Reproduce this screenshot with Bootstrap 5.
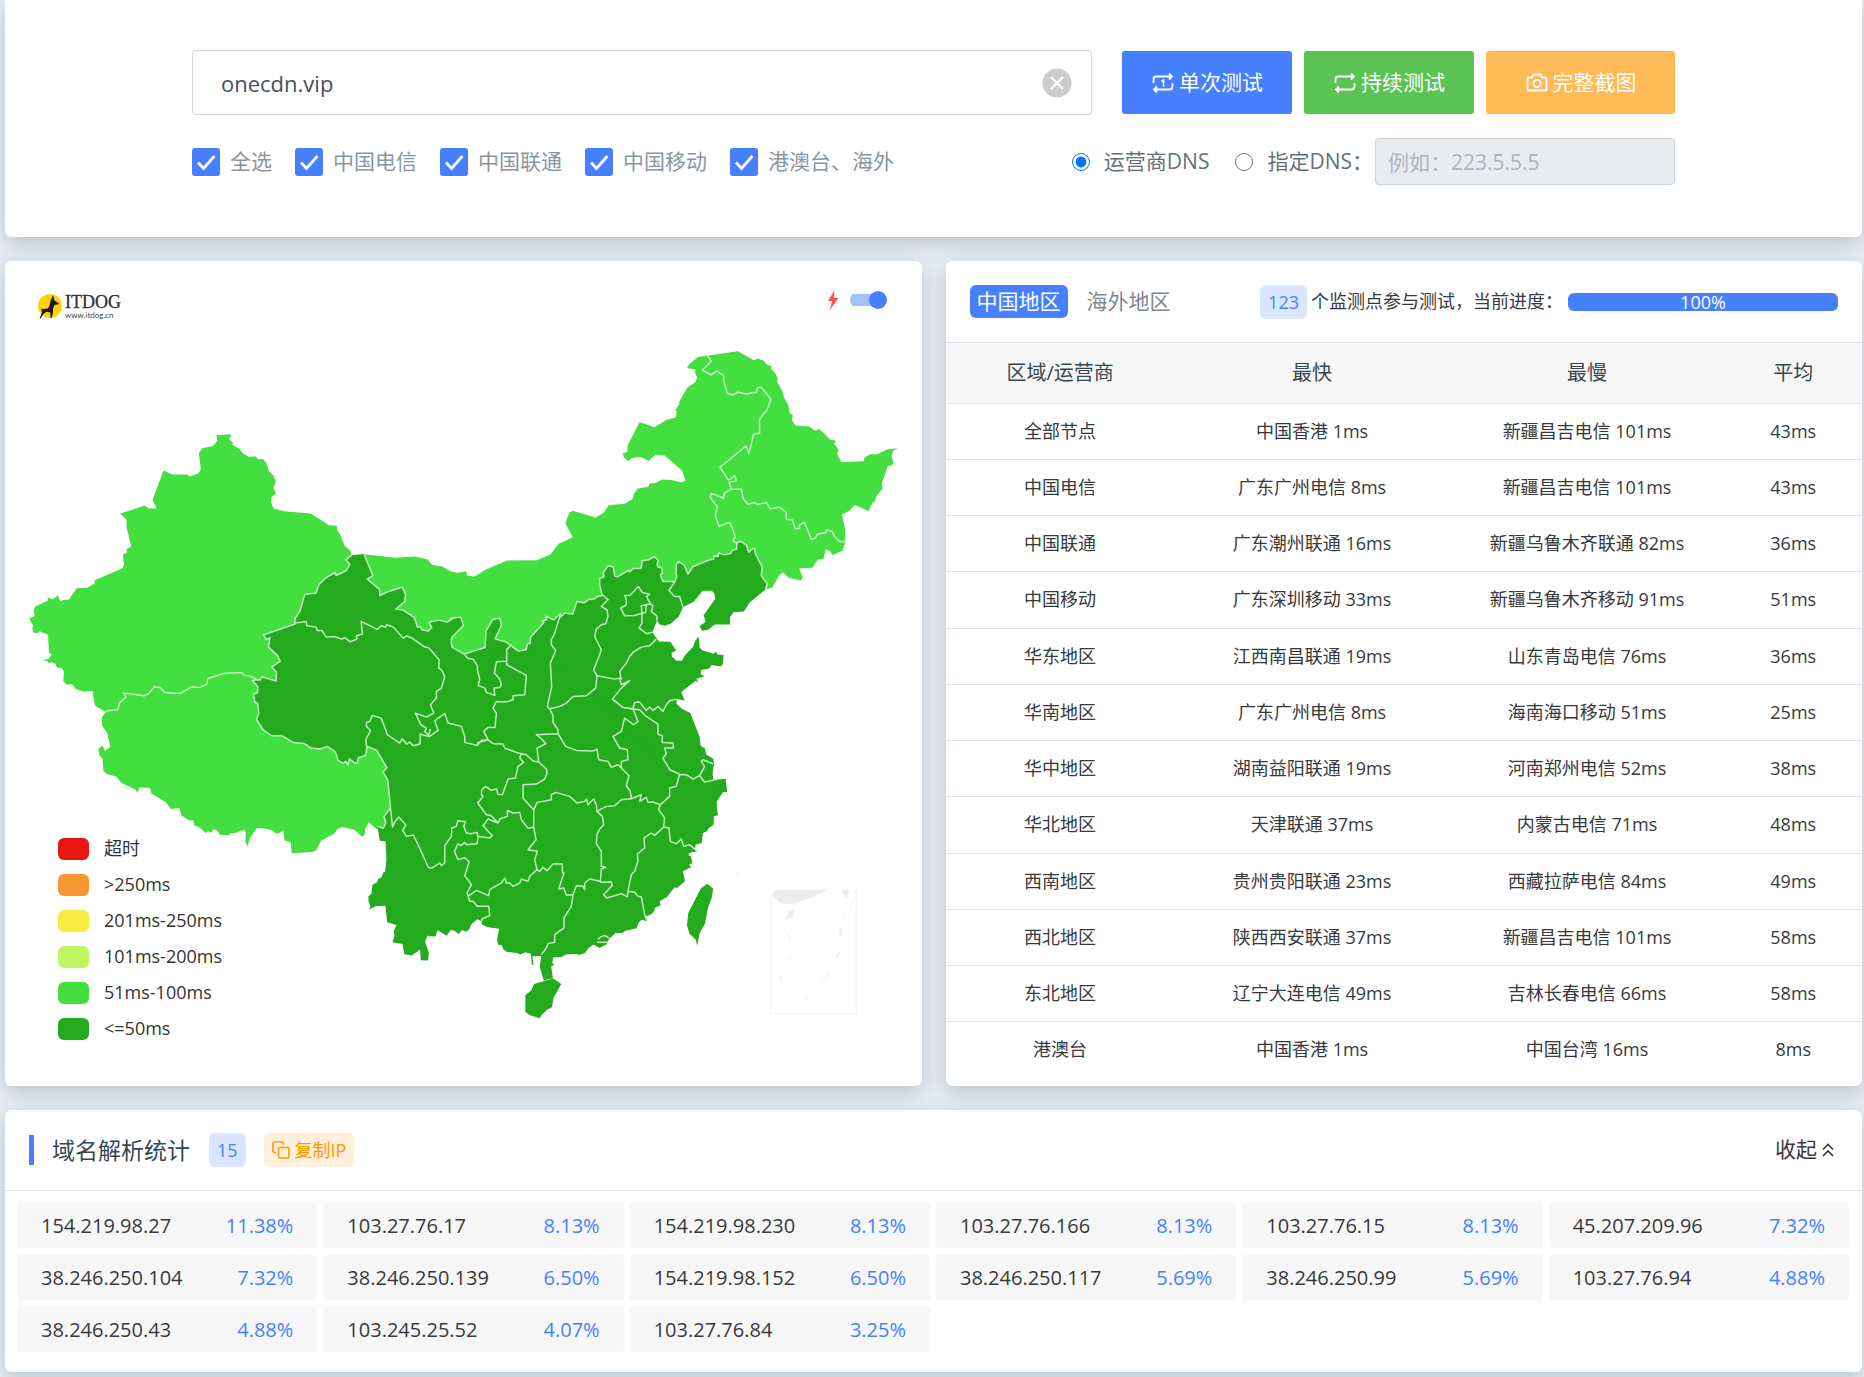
<!DOCTYPE html>
<html lang="zh-CN">
<head>
<meta charset="utf-8">
<meta name="viewport" content="width=device-width, initial-scale=1">
<title>ITDOG</title>
<link href="https://cdn.jsdelivr.net/npm/bootstrap@5.3.0/dist/css/bootstrap.min.css" rel="stylesheet">
<style>
:root{--brand:#4680ff;--rule:#dee5ea}
body{background:#e9eef4;font-family:"Open Sans","Noto Sans CJK SC",sans-serif;font-size:18px;color:#37393c;line-height:27px}
.page{padding:0 2px 5px 5px}
.panel{background:#fff;border-radius:6px;box-shadow:0 6px 20px rgba(69,90,110,.3)}
.panel-top{border-radius:0 0 6px 6px;padding:50px 187px 52px}
.fs-21{font-size:21px}
.host-box{height:65px;border:1px solid #ced4da;border-radius:4px;font-size:22px;padding:0 60px 0 28px;color:#495057}
.clear-btn{right:20px;top:18px;width:30px;height:30px}
.actions{gap:12px;margin-left:30px}
.action{height:63px;width:170px;border-radius:3px;font-size:21px;color:#fff;gap:4px;padding:0}
.action-wide{width:189px}
.c-blue{background:var(--brand)}.c-green{background:#5ac354}.c-orange{background:#ffb957}
.options{margin-top:23px}
.ticks{gap:23px}
.ticks label{gap:10px}
.form-check-input.tick{width:28px;height:28px;margin:0;border:0;border-radius:3px;float:none}
.form-check-input.tick:checked{background-color:var(--brand);background-image:url("data:image/svg+xml,%3csvg xmlns='http://www.w3.org/2000/svg' viewBox='0 0 28 28'%3e%3cpath d='M6 14.500l5.500 6L22.500 8' fill='none' stroke='%23fff' stroke-width='2.800'/%3e%3c/svg%3e")}
.pick{width:18px;height:18px;margin:0;accent-color:#0075ff}
.dns-pick{gap:14px;margin-right:26px}
.dns-last{margin-right:2px}
.t-soft{color:#8b959e}.t-dim{color:#65707b}
.dns-box{width:300px;height:47px;border:1px solid #ced4da;border-radius:4px;font-size:21px;padding:0 12px}
.dns-box:disabled{background:#e9ecef}
.dns-box::placeholder{color:#adb5bd}
.legend{left:53px;bottom:39px}
.legend li{height:36px;gap:15px;color:#333}
.swatch{width:31px;height:22px;border-radius:6px}
.toggle-wrap{right:35px;top:29px;gap:11px}
.toggle{appearance:none;width:37px;height:18px;margin:0;position:relative;background:linear-gradient(#a3c0ff,#a3c0ff) 0 3px/34px 12px no-repeat;border-radius:9px}
.toggle::before{content:"";position:absolute;right:0;top:0;width:18px;height:18px;border-radius:50%;background:var(--brand)}
.card-top{height:81px;padding:0 27px 0 24px;border-bottom:1px solid var(--rule)}
.card-top-tabs{height:82px;padding-right:24px}
.tab-on{background:var(--brand);color:#fff;border:0;border-radius:6px;height:33px;line-height:33px;padding:0 7px}
.tab-off{color:#7e868e;padding:0 7px;border:0;background:none;line-height:33px}
.chip{background:#dae6ff;color:var(--brand);border-radius:6px;height:34px;line-height:34px;padding:0 8px}
.chip-copy{background:#fff0dd;color:#ff9800;border:0;gap:5px;margin-left:14px}
.meter{width:270px;height:18px;border-radius:6px;font-size:18px;margin-left:5px;overflow:visible}
.meter .progress-bar{background:var(--brand);line-height:18px;border-radius:6px;overflow:visible}
.stats{height:734px;text-align:center}
.stats th,.stats td{padding:0;border-bottom:1px solid var(--rule);vertical-align:middle;color:#37393c}
.stats thead tr{height:60px}
.stats th{font-weight:400;font-size:20px;background:#f7f7f7;color:#37474f}
.stats tbody tr:last-child td{border-bottom:0}
.title-bar{width:5px;height:30px;background:var(--brand)}
.title-text{font-size:23px;line-height:34px;color:#37474f;font-weight:400;margin:0 15px 0 18px}
.ip-wrap{padding:12px 10px 20px 9px}
.ip-cell{height:45px;background:#f7f7f7;border-radius:4px;padding:0 24px;font-size:20px}
.ip-grid{--bs-gutter-x:6px;--bs-gutter-y:7px}
.ip-cell a{color:#37393c;text-decoration:none}
.t-blue{color:var(--brand)}
.lands{fill:#43df40}.landd{fill:#24aa1d}
.edge{fill:none;stroke:#c4efc2;stroke-width:4.4;stroke-linejoin:round}
</style>
<script src="https://cdn.jsdelivr.net/npm/bootstrap@5.3.0/dist/js/bootstrap.bundle.min.js"></script>
</head>
<body>
<div class="page">

<section class="panel panel-top">
  <div class="d-flex align-items-center">
    <div class="position-relative flex-grow-1">
      <input class="form-control host-box" type="text" value="onecdn.vip" aria-label="域名">
      <button class="btn p-0 border-0 position-absolute clear-btn d-flex" type="button" aria-label="清除">
        <svg width="30" height="30" viewBox="0 0 30 30"><circle cx="15" cy="15" r="14.5" fill="#ccc"/><path d="M9 9l12 12M21 9L9 21" stroke="#fff" stroke-width="2.2"/></svg>
      </button>
    </div>
    <div class="d-flex actions">
      <button class="btn action c-blue d-flex align-items-center justify-content-center" type="button">
        <svg width="24" height="24" viewBox="0 0 24 24" fill="none" stroke="#fff" stroke-width="1.8"><path d="M2.5 12V8.500Q2.500 5.500 5.500 5.500H21M18 2.500l3 3-3 3M21.500 12v3.500q0 3-3 3H3M6 15.500l-3 3 3 3"/><path d="M10.500 10.500l2-1.300v6.500" stroke-width="1.500"/></svg>单次测试</button>
      <button class="btn action c-green d-flex align-items-center justify-content-center" type="button">
        <svg width="24" height="24" viewBox="0 0 24 24" fill="none" stroke="#fff" stroke-width="1.8"><path d="M2.500 12V8.500Q2.500 5.500 5.500 5.500H21M18 2.500l3 3-3 3M21.500 12v3.500q0 3-3 3H3M6 15.500l-3 3 3 3"/></svg>持续测试</button>
      <button class="btn action action-wide c-orange d-flex align-items-center justify-content-center" type="button">
        <svg width="24" height="24" viewBox="0 0 24 24" fill="none" stroke="#fff" stroke-width="1.9" stroke-linejoin="round"><path d="M2.500 7.500q0-1 1-1H7l1.500-3h7l1.500 3h3.500q1 0 1 1v11q0 1-1 1h-17q-1 0-1-1z"/><circle cx="12" cy="12.500" r="3.600"/></svg>完整截图</button>
    </div>
  </div>
  <div class="d-flex align-items-center justify-content-between fs-21 options">
    <div class="d-flex t-soft ticks">
      <label class="d-flex align-items-center"><input class="form-check-input tick" type="checkbox" checked><span>全选</span></label>
      <label class="d-flex align-items-center"><input class="form-check-input tick" type="checkbox" checked><span>中国电信</span></label>
      <label class="d-flex align-items-center"><input class="form-check-input tick" type="checkbox" checked><span>中国联通</span></label>
      <label class="d-flex align-items-center"><input class="form-check-input tick" type="checkbox" checked><span>中国移动</span></label>
      <label class="d-flex align-items-center"><input class="form-check-input tick" type="checkbox" checked><span>港澳台、海外</span></label>
    </div>
    <div class="d-flex align-items-center t-dim">
      <label class="d-flex align-items-center dns-pick"><input class="pick" type="radio" name="dns" checked><span>运营商DNS</span></label>
      <label class="d-flex align-items-center dns-pick dns-last"><input class="pick" type="radio" name="dns"><span>指定DNS：</span></label>
      <input class="form-control dns-box" type="text" placeholder="例如：223.5.5.5" aria-label="指定DNS" disabled>
    </div>
  </div>
</section>

<div class="d-flex mt-4 gap-4">
  <section class="panel position-relative" style="flex:1 1 0">
    <svg class="d-block w-100" viewBox="5 261 917 825" role="img" aria-label="中国地图">
      <g transform="translate(38 294)">
        <circle cx="12" cy="12" r="12" fill="#fcd20a"/>
        <path fill="#231815" d="M15 1L16.500 6.500 21 9.500 20 10.500 16.500 11 15 14.500 15 19 13.500 24H12.500L12.300 18.500 8.500 17.800 5.500 20 2.500 24.500H1.500L4 18.500 3.200 14.500 4.500 15 9.500 14.500 11.500 12 12.500 7Z"/>
        <text x="27" y="14" font-family="Liberation Serif,serif" font-size="18" fill="#333" stroke="#333" stroke-width=".3">ITDOG</text>
        <text x="27" y="24" font-family="Lato,sans-serif" font-size="8" fill="#444">www.itdog.cn</text>
      </g>
      <g transform="translate(0 260) scale(.33333)">
        <path class="lands" d="M650 526L691 523 694 530 687 537 700 549 697 554 720 568 729 580 747 591 767 589 774 598 790 598 799 608 807 633 822 648 828 668 821 683 828 700 814 714 814 728 821 746 853 754 933 761 988 796 1011 798 1012 812 1021 824 1034 857 1052 874 1056 886 1091 883 1187 894 1246 890 1284 899 1297 915 1327 920 1352 934 1374 940 1398 935 1400 947 1423 951 1440 942 1440 1440 327 1440 322 1420 306 1396 306 1375 317 1371 320 1357 286 1338 280 1310 278 1294 250 1295 227 1287 215 1273 201 1275 190 1264 192 1237 186 1225 171 1223 166 1211 153 1207 147 1211 143 1205 130 1201 146 1197 155 1185 147 1178 144 1125 119 1114 111 1120 99 1117 97 1105 99 1096 87 1076 104 1069 101 1052 106 1040 145 1021 142 1013 159 1018 173 1006 180 1023 207 1019 230 985 262 984 284 971 284 961 368 925 372 914 369 884 382 877 379 868 394 860 380 804 380 780 360 762 434 737 447 746 470 746 458 720 491 632 517 644 562 644 569 650 595 641 603 628 597 580 607 565 639 558 652 543Z"/>
      </g>
      <g transform="translate(0 700) scale(.33333)">
        <path class="lands" d="M283 0L286 17 318 37 306 52 306 76 323 102 331 142 315 154 308 138 295 146 298 166 308 178 310 213 321 223 350 231 364 249 408 270 412 281 418 263 450 264 454 281 498 308 513 328 539 325 545 348 570 363 581 361 582 376 600 384 617 400 626 394 634 400 640 389 650 391 661 406 688 406 694 400 704 401 733 390 738 400 736 428 744 440 749 416 771 385 792 386 815 391 830 402 850 395 854 422 872 428 876 461 940 457 950 450 964 423 1005 401 1012 389 1028 382 1065 391 1086 411 1096 404 1096 388 1107 368 1130 388 1140 390 1174 390 1171 0Z"/>
      </g>
      <g transform="translate(450 330) scale(.33333)">
        <path class="lands" d="M0 725L24 729 50 725 51 737 73 742 104 721 172 692 262 691 302 674 327 642 369 622 347 580 359 548 368 543 438 563 462 549 477 526 525 522 548 508 553 492 564 476 597 471 599 461 616 460 637 449 664 450 697 457 708 452 697 422 645 377 618 374 597 393 575 381 547 384 536 393 523 383 519 370 533 366 534 346 570 276 614 292 650 270 679 262 681 243 677 240 689 222 689 215 714 172 738 156 742 142 736 128 738 119 712 114 719 103 745 81 865 64 913 91 925 86 944 93 950 103 966 109 964 117 976 128 985 146 982 154 1000 187 1003 203 1016 224 1020 250 1030 255 1027 271 1038 287 1079 290 1095 302 1110 298 1143 330 1159 332 1154 342 1168 360 1162 372 1176 397 1242 394 1245 383 1263 373 1283 373 1312 359 1344 355 1331 363 1326 378 1331 397 1329 405 1315 408 1297 460 1299 476 1280 500 1276 515 1270 517 1257 544 1215 525 1200 543 1177 554 1187 600 1186 640 1180 662 1151 675 1158 688 1142 665 1129 658 1122 687 1105 690 1088 714 1048 716 1060 742 1054 752 1017 744 1001 728 989 736 968 774 948 779 900 790 800 760 740 770 650 800 480 860 330 960 210 1000 0 1000Z"/>
        <path class="landd" d="M0 866L33 862 41 887 6 923 4 938 8 953 43 973 106 953 109 903 129 869 150 865 155 886 136 927 170 937 206 964 229 960 233 943 241 941 243 922 283 878 276 874 291 870 288 859 312 870 332 852 330 864 345 850 369 853 382 815 403 819 417 809 436 807 443 800 458 797 450 765 450 746 463 741 461 728 475 708 491 711 495 739 504 741 537 721 539 726 551 716 575 715 577 693 597 690 614 680 626 693 622 705 627 713 636 712 638 730 632 735 640 755 676 755 682 739 679 733 680 703 688 696 704 706 715 733 730 710 780 690 792 688 794 678 806 679 807 669 825 675 843 671 848 662 861 658 862 640 872 634 890 645 897 667 908 657 915 656 917 671 938 712 935 737 953 762 948 779 900 818 883 845 852 847 841 862 841 884 796 884 775 900 757 903 750 889 768 876 762 856 797 807 794 790 786 783 759 783 733 815 700 832 687 861 664 881 645 888 630 884 622 873 608 907 628 935 662 936 680 962 666 969 667 981 681 993 697 993 705 978 730 952 737 933 747 920 750 953 757 961 790 972 800 966 803 974 822 976 820 1003 813 1010 785 1006 779 1016 755 1021 753 1033 764 1040 741 1047 746 1060 738 1053 695 1087 705 1112 681 1108 681 1122 697 1137 722 1150 750 1222 753 1248 766 1256 770 1274 791 1287 793 1303 789 1330 791 1351 828 1347 833 1386 820 1388 800 1418 802 1440 0 1440Z"/>
      </g>
      <g transform="translate(240 540) scale(.33333)">
        <path class="landd" d="M336 46L373 43 399 108 382 117 419 149 420 167 441 157 463 150 488 142 497 163 495 185 468 208 490 211 523 233 527 243 533 262 543 262 546 270 565 274 576 263 568 247 597 241 622 247 640 236 664 233 669 258 637 292 636 305 632 310 637 318 674 344 736 325 801 330 836 334 860 330 1000 400 1100 500 1300 700 1430 720 1432 760 1430 790 1435 827 1423 830 1422 855 1407 866 1402 875 1390 880 1386 910 1368 915 1366 930 1374 935 1348 940 1347 947 1354 950 1358 970 1348 975 1355 982 1330 995 1336 1025 1312 1045 1305 1043 1282 1072 1260 1085 1263 1097 1246 1104 1243 1116 1233 1125 1218 1130 1222 1144 1205 1140 1195 1152 1191 1166 1155 1174 1149 1180 1128 1180 1108 1198 1100 1215 1080 1225 1062 1215 1046 1225 1036 1240 1018 1246 1010 1243 978 1245 967 1252 940 1254 938 1270 944 1277 934 1279 940 1316 912 1323 900 1280 905 1250 878 1250 881 1278 876 1274 874 1243 858 1238 841 1245 832 1240 802 1237 790 1229 787 1218 775 1215 772 1200 778 1167 745 1163 727 1155 725 1145 713 1139 695 1154 689 1168 680 1176 667 1171 657 1183 644 1173 633 1171 621 1188 593 1172 587 1191 566 1190 563 1187 556 1207 567 1238 565 1263 543 1262 541 1230 516 1248 494 1244 488 1213 458 1208 464 1190 462 1175 470 1156 442 1148 437 1098 407 1100 388 1110 392 1100 386 1085 386 1070 395 1062 398 1035 412 1028 415 1018 425 1013 431 998 436 997 440 958 437 905 420 903 413 860 430 866 438 850 433 830 452 805 444 722 430 697 441 684 411 632 382 620 377 647 355 655 353 670 345 670 329 657 325 675 318 665 310 671 295 662 288 640 280 631 262 620 240 628 214 625 193 611 160 608 126 588 95 588 70 570 50 540 57 520 53 490 45 488 41 462 53 460 54 440 38 423 50 419 61 421 66 411 109 424 110 397 95 382 121 365 113 347 86 322 90 294 78 299 72 285 165 253 165 238 180 215 195 163 229 160 237 135 258 114 286 98 289 107 320 92 330 73 318 60Z"/>
        <path class="landd" d="M940 1317L965 1333 941 1375 937 1403 923 1410 905 1427 900 1436 869 1426 857 1417 857 1366 875 1352 883 1333ZM1403 1032L1421 1047 1416 1075 1405 1105 1396 1152 1380 1180 1373 1218 1368 1200 1350 1183 1342 1157 1346 1120 1384 1046Z"/>
        <path class="edge" d="M336 46L318 60 330 73 320 92 289 107 286 98 258 114 237 135 229 160 195 163 180 215 165 238 165 253 72 285 78 299 90 294 86 322 113 347 121 365 95 382 110 397 109 424 66 411 61 421 50 419 38 423 54 440 53 460 41 462 45 488 53 490 57 520 50 540 70 570 95 588 126 588 160 608 193 611 214 625 240 628 262 620 280 631 288 640 295 662 310 671 318 665 325 675 329 657 345 670 353 670 355 655 377 647 382 620 411 632 441 684 430 697 444 722 458 862 466 845 477 832 498 856 489 872 500 890 521 886 545 937 565 982 575 986 600 970 605 978 615 970 615 918 635 890 636 865 650 860 654 843 677 846 672 860 680 880 695 882 712 878 715 892 712 912 679 915 675 908 663 918 655 912 644 935 655 960 675 954 688 966 675 1008 695 1035 682 1060 690 1085 700 1085 712 1100 747 1100 750 1128 727 1138 725 1145
        M413 860L430 866 438 850 433 830 452 805
        M373 43L399 108 382 117 419 149 420 167 441 157 463 150 488 142 497 163 495 185 468 208 490 211 523 233 527 243 533 262 543 262 546 270 565 274 576 263 568 247 597 241 622 247 640 236
        M165 250L199 245 201 258 230 262 232 272 246 272 259 292 283 290 305 298 315 294 332 306 351 298 350 288 368 283 364 245 412 269 424 258 437 262 441 255 461 262 490 295 500 288 520 297 552 320 568 325 598 360 597 385 605 390 615 410 605 445 590 455 590 475 572 495 582 520 560 532 527 520 543 555 560 565 555 575 570 590 595 572 585 543 615 521 625 550 665 560 675 590 675 608 712 617 725 602 745 600 732 575 745 563 766 563 770 520 760 505 770 485 798 487 820 480 820 468 855 465 860 407 801 375 801 330 812 318
        M380 620L378 600 392 573 380 560 380 548 390 545 398 527 424 535 443 585 480 610 487 597 500 613 510 607 520 618 541 613 541 583 565 590 572 568
        M674 344L685 356 700 358 713 378 713 390 720 420 715 437 735 445 740 458 765 467 763 445 780 443 785 435 780 418 764 400 770 366 801 364
        M712 610L745 600 760 612 790 613 795 625 835 640 860 645 880 664 897 667 892 625 918 612 905 597 890 585 955 582 955 570 940 548 940 528 930 507 923 500 936 440 932 370 948 332 935 315 935 300 945 280 962 225
        M845 640L840 655 852 668 835 680 827 715 805 718 788 765 775 764 770 747 755 752 737 740 726 750 725 765 730 770 714 790 740 825 755 828 775 850 780 838 803 830 803 812 820 820 840 818 845 840 865 866 882 862 882 810 865 792 850 775 850 735 890 733 915 718 922 700 920 688 897 667
        M712 890L750 895 758 888 730 858 745 838 775 850M882 862L889 900 865 930 893 935 885 960 892 990 870 1010 865 1025 845 1018 840 1030 820 1040 810 1030 800 1030 795 1015 785 1030 750 1050 747 1068 710 1052 685 1070M892 990L900 995 910 983 922 993 940 973 968 973 968 1000 973 1000 957 1048 972 1045 980 1067 1000 1065 995 1100 973 1135 973 1165 945 1185 945 1208 925 1212 920 1225 905 1245
        M882 810L892 788 935 780 935 765 948 758 990 770 1012 790 1035 785 1040 778 1045 795 1062 778 1070 795 1072 815 1088 830 1092 855 1080 868 1072 885 1070 912 1085 935 1085 980 1098 983 1085 988 1082 1025 1050 1018 1035 1030 1035 1050 1030 1040 1010 1038 1000 1065
        M1082 1028L1115 1027 1118 1037 1092 1065 1102 1075 1145 1062 1163 1072 1165 1055 1185 1058 1195 1070 1205 1072 1215 1125 1220 1140M1165 1055L1175 1005 1185 995 1195 965 1193 943 1215 925 1213 895 1235 880 1245 887 1272 862 1275 835 1257 810 1262 795 1240 787 1225 788 1220 773 1200 785 1205 765 1175 777 1145 780 1125 798 1100 800 1072 815M1175 775L1172 755 1160 738 1168 708 1145 685 1135 675 1115 683 1105 665 1077 660 1072 628 1060 634 1010 632 978 620 955 582
        M930 507L960 500 980 490 1000 470 1040 468 1068 445 1072 408 1062 390 1078 350 1085 330 1065 290 1070 268 1085 255 1098 252 1105 230 1102 210 1085 200 1105 180 1088 165M1072 408L1125 418 1140 415 1145 435 1170 423 1145 445 1118 478 1150 503 1180 507 1185 488 1200 487 1220 512 1230 502 1240 512 1255 500 1270 515 1280 495 1290 483 1312 478M1145 420L1140 395 1160 370 1170 350 1180 338 1205 322 1230 318 1250 298
        M1180 507L1195 545 1182 555 1155 535 1145 575 1120 590 1140 625 1163 630 1165 660 1145 665 1145 685M1170 507L1200 510 1220 530 1235 540 1255 553 1255 583 1268 588 1268 608 1300 610 1302 625 1275 625 1280 642 1270 655 1290 690 1320 703 1310 740 1290 745 1290 770 1262 795M1320 705L1340 705 1360 718 1380 708 1395 727 1432 719M1380 708L1395 680 1385 665 1390 660 1420 672M1272 862L1288 865 1292 905 1310 912 1325 898 1332 920 1350 915 1370 932M1072 1208L1108 1208M1075 1200Q1090 1180 1108 1195"/>
      </g>
      <g transform="translate(450 330) scale(.33333)">
        <path class="edge" d="M0 866L33 862 41 887 6 923 4 938 8 953 43 973 106 953 109 903 129 869 150 865 155 886 136 927 170 937 206 964 229 960 233 943 241 941 243 922 283 878 276 874 291 870 288 859 312 870 332 852 330 864 345 850 369 853 382 815 403 819 417 809 436 807 443 800 458 797 450 765 450 746 463 741 461 728 475 708 491 711 495 739 504 741 537 721 539 726 551 716 575 715 577 693 597 690 614 680 626 693 622 705 627 713 636 712 638 730 632 735 640 755 676 755 682 739 679 733 680 703 688 696 704 706 715 733 730 710 780 690 792 688 794 678 806 679 807 669 825 675 843 671 848 662 861 658 862 640 872 634 890 645 897 667 908 657 915 656 917 671 938 712 935 737 953 762 948 779
        M513 835L530 825 530 810 525 797 540 797 550 787 566 770 578 788 600 793 590 800 603 822 575 828 577 850 555 857 525 858ZM603 822L610 828 605 845 622 858 622 873M577 850L577 880 568 895 592 912 608 907M590 825L588 848 577 850
        M774 78L785 93 758 121 785 135 801 123 822 137 822 150 833 190 850 195 865 187 890 192 920 187 925 173 936 173 964 208 953 238 930 268 930 310 912 313 898 372 890 348 811 412 836 450 845 446 855 437 860 453 838 457 845 478 825 490 822 505 785 490 782 503 803 530 797 555 808 590 841 577 857 620 850 633 862 640
        M845 478L876 478 880 505 895 523 915 518 925 524 950 518 962 537 990 532 1010 548 1010 568 1028 570 1037 597 1050 595 1050 585 1065 577 1085 628 1098 625 1103 613 1130 608 1130 600 1148 605 1155 620 1170 635 1187 635M676 755L658 782 675 800 690 800 700 832"/>
      </g>
      <g transform="translate(0 260) scale(.33333)">
        <path class="edge" d="M317 1357L324 1352 353 1351 358 1330 378 1312 372 1300 433 1308 446 1302 463 1281 481 1284 495 1298 540 1301 576 1281 600 1283 621 1273 624 1256 671 1241 725 1238 733 1246 751 1249 775 1262"/>
      </g>
      <g transform="translate(600 780) scale(.33333)">
        <path d="M515 342V703H770V327" fill="none" stroke="#f1f1f1" stroke-width="3"/>
        <path fill="#ececec" d="M515 342L532 330H684L632 355 575 374 542 371ZM725 331H750L740 357ZM568 394L588 390 576 412 558 419ZM410 282L420 278 417 284ZM720 444H726V468H720ZM718 515L725 513 715 533 708 534ZM538 588H544L550 610Z"/>
        <path d="M765 357L752 378M738 400L726 418M565 460L572 484M582 521L565 541M690 580L667 610M630 652L612 661" fill="none" stroke="#ececec" stroke-width="2"/>
      </g>
    </svg>
    <label class="position-absolute toggle-wrap d-flex align-items-center">
      <svg width="12" height="20" viewBox="0 0 12 20"><path d="M7.500 0L1 11h4l-2 9L11.500 8H7z" fill="#ff5252"/></svg>
      <input class="toggle" type="checkbox" role="switch" aria-label="极速模式" checked>
    </label>
    <ul class="list-unstyled position-absolute legend m-0">
      <li class="d-flex align-items-center"><span class="swatch" style="background:#e71610"></span>超时</li>
      <li class="d-flex align-items-center"><span class="swatch" style="background:#f89832"></span>&gt;250ms</li>
      <li class="d-flex align-items-center"><span class="swatch" style="background:#f8eb46"></span>201ms-250ms</li>
      <li class="d-flex align-items-center"><span class="swatch" style="background:#bef663"></span>101ms-200ms</li>
      <li class="d-flex align-items-center"><span class="swatch" style="background:#43df40"></span>51ms-100ms</li>
      <li class="d-flex align-items-center"><span class="swatch" style="background:#24aa1d"></span>&lt;=50ms</li>
    </ul>
  </section>

  <section class="panel" style="flex:1 1 0">
    <div class="card-top card-top-tabs d-flex align-items-center justify-content-between">
      <div class="d-flex fs-21" style="gap:12px"><button class="tab-on" type="button">中国地区</button><button class="tab-off" type="button">海外地区</button></div>
      <div class="d-flex align-items-center">
        <span class="chip me-1">123</span><span>个监测点参与测试，当前进度：</span>
        <div class="progress meter"><div class="progress-bar" role="progressbar" aria-label="进度" aria-valuenow="100" style="width:100%">100%</div></div>
      </div>
    </div>
    <table class="stats w-100">
      <colgroup><col style="width:25%"><col style="width:30%"><col style="width:30%"><col style="width:15%"></colgroup>
      <thead><tr><th>区域/运营商</th><th>最快</th><th>最慢</th><th>平均</th></tr></thead>
      <tbody>
        <tr><td>全部节点</td><td>中国香港 1ms</td><td>新疆昌吉电信 101ms</td><td>43ms</td></tr>
        <tr><td>中国电信</td><td>广东广州电信 8ms</td><td>新疆昌吉电信 101ms</td><td>43ms</td></tr>
        <tr><td>中国联通</td><td>广东潮州联通 16ms</td><td>新疆乌鲁木齐联通 82ms</td><td>36ms</td></tr>
        <tr><td>中国移动</td><td>广东深圳移动 33ms</td><td>新疆乌鲁木齐移动 91ms</td><td>51ms</td></tr>
        <tr><td>华东地区</td><td>江西南昌联通 19ms</td><td>山东青岛电信 76ms</td><td>36ms</td></tr>
        <tr><td>华南地区</td><td>广东广州电信 8ms</td><td>海南海口移动 51ms</td><td>25ms</td></tr>
        <tr><td>华中地区</td><td>湖南益阳联通 19ms</td><td>河南郑州电信 52ms</td><td>38ms</td></tr>
        <tr><td>华北地区</td><td>天津联通 37ms</td><td>内蒙古电信 71ms</td><td>48ms</td></tr>
        <tr><td>西南地区</td><td>贵州贵阳联通 23ms</td><td>西藏拉萨电信 84ms</td><td>49ms</td></tr>
        <tr><td>西北地区</td><td>陕西西安联通 37ms</td><td>新疆昌吉电信 101ms</td><td>58ms</td></tr>
        <tr><td>东北地区</td><td>辽宁大连电信 49ms</td><td>吉林长春电信 66ms</td><td>58ms</td></tr>
        <tr><td>港澳台</td><td>中国香港 1ms</td><td>中国台湾 16ms</td><td>8ms</td></tr>
      </tbody>
    </table>
  </section>
</div>

<section class="panel mt-4">
  <div class="card-top d-flex align-items-center">
    <span class="title-bar"></span>
    <h2 class="title-text">域名解析统计</h2>
    <span class="chip mx-1">15</span>
    <button class="chip chip-copy d-flex align-items-center" type="button">
      <svg width="18" height="18" viewBox="0 0 18 18" fill="none" stroke="#ff9800" stroke-width="1.6"><rect x="6.500" y="6.500" width="10.500" height="10.500" rx="1.500"/><path d="M4 11.500H2.500q-1.500 0-1.500-1.500V2.500Q1 1 2.500 1H10q1.500 0 1.500 1.500V4"/></svg>复制IP</button>
    <a class="ms-auto text-decoration-none text-reset fs-21 d-flex align-items-center gap-1" href="#ips">收起<svg width="14" height="16" viewBox="0 0 14 16" fill="none" stroke="#37393c" stroke-width="1.7"><path d="M2 7.500l5-5 5 5M2 14l5-5 5 5"/></svg></a>
  </div>
  <div class="ip-wrap" id="ips">
    <div class="row row-cols-6 ip-grid mx-0 mt-0">
      <div class="col mt-0"><div class="ip-cell d-flex align-items-center justify-content-between"><a href="#ips">154.219.98.27</a><span class="t-blue">11.38%</span></div></div>
      <div class="col mt-0"><div class="ip-cell d-flex align-items-center justify-content-between"><a href="#ips">103.27.76.17</a><span class="t-blue">8.13%</span></div></div>
      <div class="col mt-0"><div class="ip-cell d-flex align-items-center justify-content-between"><a href="#ips">154.219.98.230</a><span class="t-blue">8.13%</span></div></div>
      <div class="col mt-0"><div class="ip-cell d-flex align-items-center justify-content-between"><a href="#ips">103.27.76.166</a><span class="t-blue">8.13%</span></div></div>
      <div class="col mt-0"><div class="ip-cell d-flex align-items-center justify-content-between"><a href="#ips">103.27.76.15</a><span class="t-blue">8.13%</span></div></div>
      <div class="col mt-0"><div class="ip-cell d-flex align-items-center justify-content-between"><a href="#ips">45.207.209.96</a><span class="t-blue">7.32%</span></div></div>
      <div class="col"><div class="ip-cell d-flex align-items-center justify-content-between"><a href="#ips">38.246.250.104</a><span class="t-blue">7.32%</span></div></div>
      <div class="col"><div class="ip-cell d-flex align-items-center justify-content-between"><a href="#ips">38.246.250.139</a><span class="t-blue">6.50%</span></div></div>
      <div class="col"><div class="ip-cell d-flex align-items-center justify-content-between"><a href="#ips">154.219.98.152</a><span class="t-blue">6.50%</span></div></div>
      <div class="col"><div class="ip-cell d-flex align-items-center justify-content-between"><a href="#ips">38.246.250.117</a><span class="t-blue">5.69%</span></div></div>
      <div class="col"><div class="ip-cell d-flex align-items-center justify-content-between"><a href="#ips">38.246.250.99</a><span class="t-blue">5.69%</span></div></div>
      <div class="col"><div class="ip-cell d-flex align-items-center justify-content-between"><a href="#ips">103.27.76.94</a><span class="t-blue">4.88%</span></div></div>
      <div class="col"><div class="ip-cell d-flex align-items-center justify-content-between"><a href="#ips">38.246.250.43</a><span class="t-blue">4.88%</span></div></div>
      <div class="col"><div class="ip-cell d-flex align-items-center justify-content-between"><a href="#ips">103.245.25.52</a><span class="t-blue">4.07%</span></div></div>
      <div class="col"><div class="ip-cell d-flex align-items-center justify-content-between"><a href="#ips">103.27.76.84</a><span class="t-blue">3.25%</span></div></div>
    </div>
  </div>
</section>
</div>
</body>
</html>
